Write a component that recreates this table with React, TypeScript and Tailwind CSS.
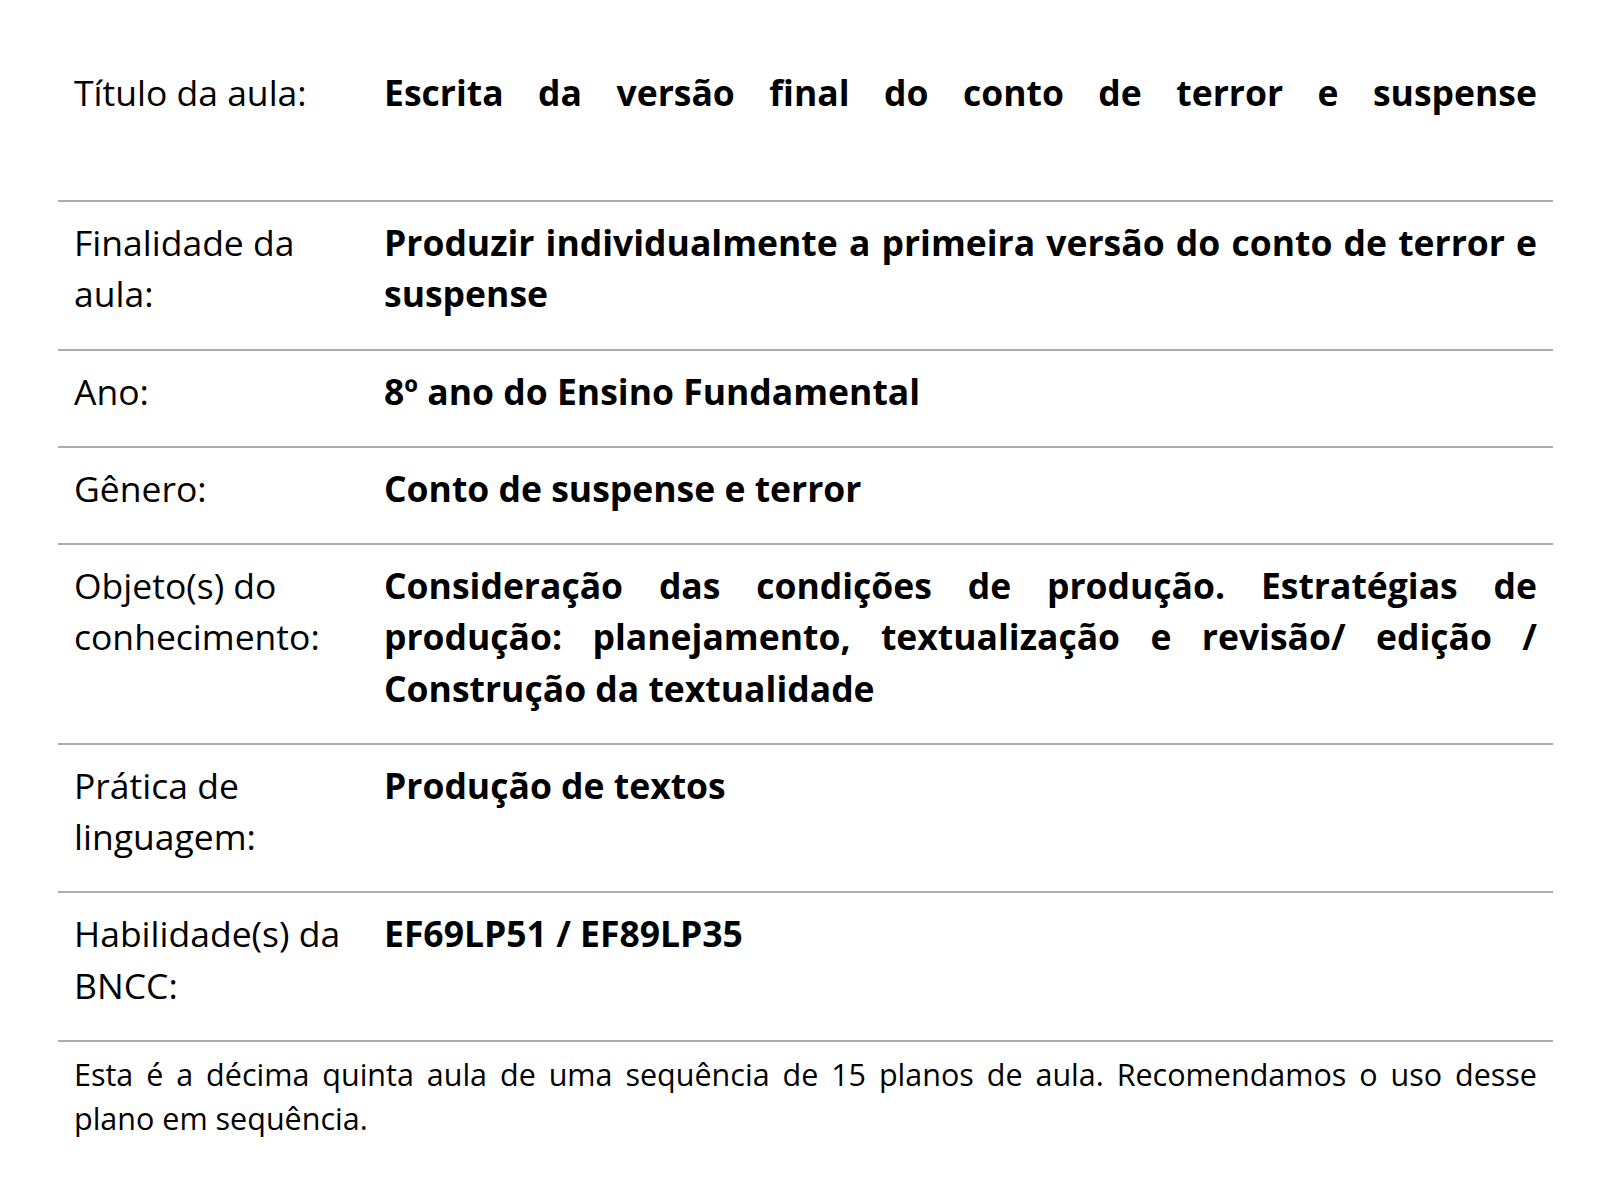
const rows: { label: string; value: string }[] = [
  { label: 'Finalidade da aula:', value: 'Produzir individualmente a primeira versão do conto de terror e suspense' },
  { label: 'Ano:', value: '8º ano do Ensino Fundamental' },
  { label: 'Gênero:', value: 'Conto de suspense e terror' },
  {
    label: 'Objeto(s) do conhecimento:',
    value:
      'Consideração das condições de produção. Estratégias de produção: planejamento, textualização e revisão/ edição / Construção da textualidade',
  },
  { label: 'Prática de linguagem:', value: 'Produção de textos' },
  { label: 'Habilidade(s) da BNCC:', value: 'EF69LP51 / EF89LP35' },
]

export default function App() {
  return (
    <div className="min-h-screen bg-white text-black font-['Open_Sans',sans-serif] pt-[49px]">
      <div className="ml-[58px] w-[1495px]">
        <div className="flex border-b-2 border-[#ababab]">
          <div className="w-[310px] shrink-0 px-4 pt-[18px] pb-[26px] text-[35.5px] leading-[51.25px]">
            Título da aula:
          </div>
          <div className="flex-1 px-4 pt-[18px] pb-[26px] text-[35.5px] leading-[51.25px] font-bold">
            <p className="min-h-[107px] text-justify [text-align-last:justify]">
              Escrita da versão final do conto de terror e suspense
            </p>
          </div>
        </div>
        {rows.map((r) => (
          <div key={r.label} className="flex border-b-2 border-[#ababab]">
            <div className="w-[310px] shrink-0 px-4 pt-[15px] pb-[29px] text-[35.5px] leading-[51.25px]">
              {r.label}
            </div>
            <div className="flex-1 px-4 pt-[15px] pb-[29px] text-[35.5px] leading-[51.25px] font-bold text-justify">
              {r.value}
            </div>
          </div>
        ))}
        <p className="px-4 pt-[10px] text-[30.5px] leading-[44px] text-justify">
          Esta é a décima quinta aula de uma sequência de 15 planos de aula. Recomendamos o uso desse plano em
          sequência.
        </p>
      </div>
    </div>
  )
}
